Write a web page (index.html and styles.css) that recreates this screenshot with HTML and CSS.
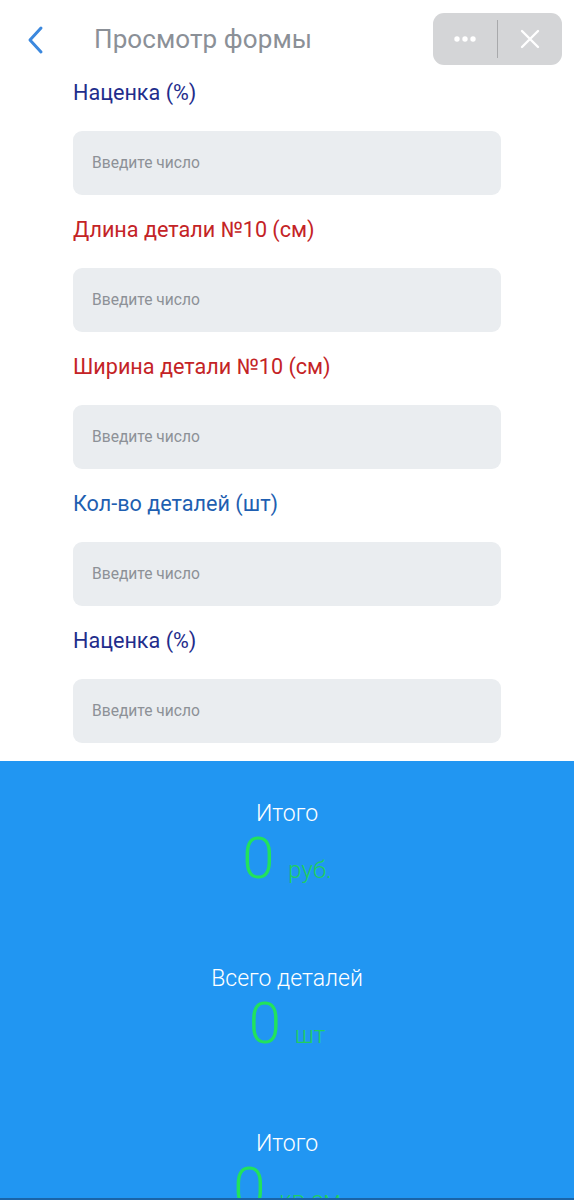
FILE: index.html
```html
<!DOCTYPE html>
<html lang="ru">
<head>
<meta charset="utf-8">
<link rel="stylesheet" href="styles.css">
</head>
<body>
<header class="topbar">
  <div class="back">
    <svg width="24" height="30" viewBox="0 0 24 30"><path d="M17 3 L6 15 L17 27" fill="none" stroke="#3b88de" stroke-width="3" stroke-linecap="round" stroke-linejoin="round"/></svg>
  </div>
  <div class="title">Просмотр формы</div>
  <div class="capsule">
    <div class="cap-btn">
      <svg width="26" height="8" viewBox="0 0 26 8"><circle cx="5" cy="4" r="2.7" fill="#fff"/><circle cx="13" cy="4" r="2.7" fill="#fff"/><circle cx="21" cy="4" r="2.7" fill="#fff"/></svg>
    </div>
    <div class="cap-div"></div>
    <div class="cap-btn">
      <svg width="20" height="20" viewBox="0 0 20 20"><path d="M2 2 L18 18 M18 2 L2 18" stroke="#fff" stroke-width="2.4" stroke-linecap="round"/></svg>
    </div>
  </div>
</header>

<main class="form">
  <div class="field">
    <div class="label navy">Наценка (%)</div>
    <div class="input">Введите число</div>
  </div>
  <div class="field">
    <div class="label red">Длина детали №10 (см)</div>
    <div class="input">Введите число</div>
  </div>
  <div class="field">
    <div class="label red">Ширина детали №10 (см)</div>
    <div class="input">Введите число</div>
  </div>
  <div class="field">
    <div class="label blue">Кол-во деталей (шт)</div>
    <div class="input">Введите число</div>
  </div>
  <div class="field">
    <div class="label navy">Наценка (%)</div>
    <div class="input">Введите число</div>
  </div>
</main>

<section class="results">
  <div class="result">
    <div class="r-title">Итого</div>
    <div class="r-value"><span class="num">0</span><span class="unit">руб.</span></div>
  </div>
  <div class="result">
    <div class="r-title">Всего деталей</div>
    <div class="r-value"><span class="num">0</span><span class="unit">шт</span></div>
  </div>
  <div class="result">
    <div class="r-title">Итого</div>
    <div class="r-value"><span class="num">0</span><span class="unit">кв.см</span></div>
  </div>
</section>
<div class="bottom-edge"></div>
</body>
</html>
```
FILE: styles.css
```css
* { box-sizing: border-box; }
html, body { margin: 0; padding: 0; }
body {
  font-family: Roboto, "Noto Sans", "Liberation Sans", sans-serif;
  background: #fff;
  width: 574px;
  overflow-x: hidden;
}
.topbar {
  height: 78px;
  display: flex;
  align-items: center;
  padding: 0 12px 0 24px;
}
.back { width: 70px; display: flex; align-items: center; padding-top: 2px; }
.title {
  flex: 1;
  font-size: 26px;
  color: #8b9097;
  letter-spacing: 0.1px;
}
.capsule {
  width: 129px;
  height: 52px;
  background: #d4d5d7;
  border-radius: 11px;
  display: flex;
  align-items: center;
}
.cap-btn {
  flex: 1;
  display: flex;
  align-items: center;
  justify-content: center;
  height: 100%;
}
.cap-div {
  width: 1.5px;
  height: 38px;
  background: #a8a9ab;
}
.form {
  padding: 0 73px;
}
.field { margin-bottom: 20px; }
.field:last-child { margin-bottom: 18px; }
.label {
  font-size: 21.6px;
  line-height: 30px;
  height: 30px;
}
.navy { color: #1f2d8c; }
.red { color: #c42326; }
.blue { color: #1f5fb1; }
.input {
  margin-top: 23px;
  height: 64px;
  background: #eaedf0;
  border-radius: 9px;
  padding-left: 19px;
  display: flex;
  align-items: center;
  font-size: 15.6px;
  color: #8d9197;
}
.results {
  background: #2196f2;
  padding-top: 38px;
  padding-bottom: 40px;
  display: flex;
  flex-direction: column;
  gap: 65px;
  align-items: center;
}
.result { display: flex; flex-direction: column; align-items: center; }
.r-title {
  color: #fff;
  font-size: 23px;
  font-weight: 300;
  line-height: 30px;
}
.r-value {
  margin-top: 0;
  display: flex;
  align-items: baseline;
  line-height: 58px;
}
.num {
  font-size: 58px;
  font-weight: 300;
  color: #22e25c;
  line-height: 58px;
}
.unit {
  font-size: 24px;
  font-weight: 300;
  color: #20cf5e;
  margin-left: 14px;
}
.bottom-edge {
  position: fixed;
  left: 0;
  right: 0;
  bottom: 0;
  height: 2px;
  background: #1a64a8;
}
```
